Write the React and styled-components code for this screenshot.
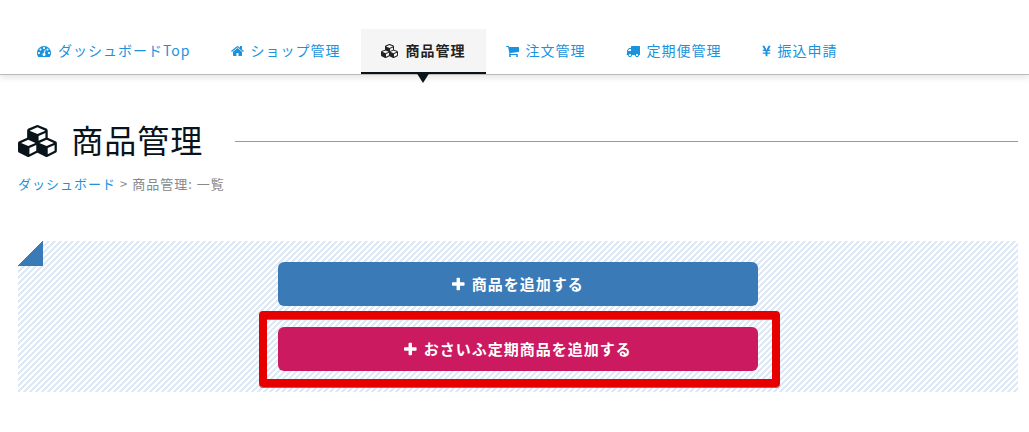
import styled, { createGlobalStyle } from "styled-components";
import { FaYenSign } from "react-icons/fa";

const GlobalStyle = createGlobalStyle`
* {
  box-sizing: border-box;
}
body {
  margin: 0;
  background: #fff;
  color: #08131a;
  font-family: "Noto Sans CJK JP", "Noto Sans", sans-serif;
  font-size: 14px;
  letter-spacing: 1px;
}
a {
  color: #1a93dc;
  text-decoration: none;
}
`;

const Icon = styled.svg`
  height: ${(props) => props.$size || 14}px;
  flex: none;
  fill: currentColor;
`;

const YenIcon = styled(FaYenSign)`
  width: 9px;
  height: 12px;
  flex: none;
`;

const Label = styled.span`
  padding-bottom: ${(props) => (props.$large ? 4 : 2)}px;
`;

const Header = styled.header`
  padding: 29px 17px 0;
  border-bottom: 1px solid #bbb;
  box-shadow: 0 3px 6px rgba(0, 0, 0, 0.1);
`;

const NavList = styled.ul`
  display: flex;
  margin: 0;
  padding: 0;
  list-style: none;
`;

const NavLink = styled.a`
  position: relative;
  display: flex;
  align-items: center;
  gap: 7px;
  height: 45px;
  padding: 0 20px;
  white-space: nowrap;
  color: ${(props) => (props.$active ? "#222" : "#1a93dc")};
  background: ${(props) => (props.$active ? "#f5f5f5" : "transparent")};
  font-weight: ${(props) => (props.$active ? 700 : 400)};
  border-bottom: 2px solid ${(props) => (props.$active ? "#08131a" : "transparent")};

  &::after {
    content: "";
    display: ${(props) => (props.$active ? "block" : "none")};
    position: absolute;
    top: 100%;
    left: 50%;
    margin-left: -7px;
    border: 7px solid transparent;
    border-top: 11px solid #08131a;
    border-bottom: 0;
  }
`;

const Main = styled.main`
  padding: 44px 11px 40px 18px;
`;

const TitleRow = styled.div`
  display: flex;
  align-items: center;
  gap: 32px;

  &::after {
    content: "";
    flex: 1;
    border-top: 1px solid #999;
  }
`;

const Title = styled.h1`
  display: flex;
  align-items: center;
  gap: 12px;
  margin: 0;
  font-size: 32px;
  font-weight: 400;
  line-height: 40px;
`;

const Breadcrumb = styled.nav`
  display: flex;
  gap: 4px;
  margin-top: 11px;
  font-size: 13px;
  line-height: 20px;
  color: #888;
`;

const Panel = styled.section`
  position: relative;
  display: flex;
  flex-direction: column;
  align-items: center;
  gap: 21px;
  margin-top: 47px;
  padding: 21px 0;
  background: linear-gradient(135deg, #dfe9f5 25%, #fff 25% 50%, #dfe9f5 50% 75%, #fff 75%) 0 0 / 6px 6px;

  &::before {
    content: "";
    position: absolute;
    top: 0;
    left: 0;
    width: 25px;
    height: 25px;
    background: linear-gradient(135deg, #fff 50%, #3a7ab7 50%);
  }
`;

const ButtonSlot = styled.div`
  position: relative;
  width: 48%;
`;

const AddButton = styled.button`
  display: flex;
  align-items: center;
  justify-content: center;
  gap: 7px;
  width: 100%;
  height: 44px;
  border: 0;
  border-radius: 6px;
  background: ${(props) => (props.$pink ? "#cc1a60" : "#3a7ab7")};
  color: #fff;
  font-family: inherit;
  font-size: 15px;
  font-weight: 700;
  letter-spacing: inherit;
  cursor: pointer;
`;

const Highlight = styled.span`
  position: absolute;
  inset: -16px -22px -16px -19px;
  border: 8px solid #e60000;
  border-radius: 4px;
  box-shadow: 0 1px 0 #777, inset 0 1px 0 #777;
  pointer-events: none;
`;

const paths = {
  dashboard:
    "M384 1152q0-53-37.5-90.5t-90.5-37.5-90.5 37.5-37.5 90.5 37.5 90.5 90.5 37.5 90.5-37.5 37.5-90.5zm192-448q0-53-37.5-90.5t-90.5-37.5-90.5 37.5-37.5 90.5 37.5 90.5 90.5 37.5 90.5-37.5 37.5-90.5zm428 481l101-382q6-26-7.5-48.5t-38.5-29.5-48 6.5-30 39.5l-101 382q-60 5-107 43.5t-63 98.5q-20 77 20 146t117 89 146-20 89-117q16-60-6-117t-72-91zm660-33q0-53-37.5-90.5t-90.5-37.5-90.5 37.5-37.5 90.5 37.5 90.5 90.5 37.5 90.5-37.5 37.5-90.5zm-640-640q0-53-37.5-90.5t-90.5-37.5-90.5 37.5-37.5 90.5 37.5 90.5 90.5 37.5 90.5-37.5 37.5-90.5zm448 192q0-53-37.5-90.5t-90.5-37.5-90.5 37.5-37.5 90.5 37.5 90.5 90.5 37.5 90.5-37.5 37.5-90.5zm320 448q0 261-141 483-19 29-54 29h-1402q-35 0-54-29-141-221-141-483 0-182 71-348t191-286 286-191 348-71 348 71 286 191 191 286 71 348z",
  home: "M1472 992v480q0 26-19 45t-45 19h-384v-384h-256v384h-384q-26 0-45-19t-19-45v-480q0-1 .5-3t.5-3l575-474 575 474q1 2 1 6zm223-69l-62 74q-8 9-21 11h-3q-13 0-21-7l-692-577-692 577q-12 8-24 7-13-2-21-11l-62-74q-8-10-7-23.5t11-21.5l719-599q32-26 76-26t76 26l244 204v-195q0-14 9-23t23-9h192q14 0 23 9t9 23v408l219 182q10 8 11 21.5t-7 23.5z",
  cubes:
    "M640 1632l384-192v-314l-384 164v342zm-64-454l404-173-404-173-404 173zm1088 454l384-192v-314l-384 164v342zm-64-454l404-173-404-173-404 173zm-448-293l384-165v-266l-384 164v267zm-64-379l441-189-441-189-441 189zm1088 518v416q0 36-19 67t-52 47l-448 224q-25 14-57 14t-57-14l-448-224q-4-2-7-4-2 2-7 4l-448 224q-25 14-57 14t-57-14l-448-224q-33-16-52-47t-19-67v-416q0-38 21.5-70t56.5-48l434-186v-400q0-38 21.5-70t56.5-48l448-192q23-10 50-10t50 10l448 192q35 16 56.5 48t21.5 70v400l434 186q36 16 57 48t21 70z",
  cart: "M704 1536q0 52-38 90t-90 38-90-38-38-90 38-90 90-38 90 38 38 90zm896 0q0 52-38 90t-90 38-90-38-38-90 38-90 90-38 90 38 38 90zm128-1088v512q0 24-16.5 42.5t-40.5 21.5l-1044 122q13 60 13 70 0 16-24 64h920q26 0 45 19t19 45-19 45-45 19h-1024q-26 0-45-19t-19-45q0-11 8-31.5t16-36 21.5-40 15.5-29.5l-177-823h-204q-26 0-45-19t-19-45 19-45 45-19h256q16 0 28.5 6.5t19.5 15.5 13 24.5 8 26 5.5 29.5 4.5 26h1201q26 0 45 19t19 45z",
  truck:
    "M640 1408q0-52-38-90t-90-38-90 38-38 90 38 90 90 38 90-38 38-90zm-384-512h384v-256h-158q-13 0-22 9l-195 195q-9 9-9 22v30zm1280 512q0-52-38-90t-90-38-90 38-38 90 38 90 90 38 90-38 38-90zm256-1088v1024q0 15-4 26.5t-13.5 18.5-16.5 11.5-23.5 6-22.5 2-25.5 0-22.5-.5q0 106-75 181t-181 75-181-75-75-181h-384q0 106-75 181t-181 75-181-75-75-181h-64q-3 0-22.5.5t-25.5 0-22.5-2-23.5-6-16.5-11.5-13.5-18.5-4-26.5q0-26 19-45t45-19v-320q0-8-.5-35t0-38 2.5-34.5 6.5-37 14-30.5 22.5-30l198-198q19-19 50.5-32t58.5-13h160v-192q0-26 19-45t45-19h1024q26 0 45 19t19 45z",
  plus: "M1600 736v192q0 40-28 68t-68 28h-416v416q0 40-28 68t-68 28h-192q-40 0-68-28t-28-68v-416h-416q-40 0-68-28t-28-68v-192q0-40 28-68t68-28h416v-416q0-40 28-68t68-28h192q40 0 68 28t28 68v416h416q40 0 68 28t28 68z",
};

// [min-x, min-y, width, height] where the drawing is not a 1792 square
const boxes = {
  home: "64 0 1664 1792",
  cubes: "0 0 2304 1792",
  cart: "64 0 1664 1792",
  plus: "192 -64 1408 1792",
};

const Glyph = ({ name, size }) => (
  <Icon viewBox={boxes[name] || "0 0 1792 1792"} $size={size} aria-hidden="true">
    <path d={paths[name]} />
  </Icon>
);

const items = [
  { icon: "dashboard", label: "ダッシュボードTop" },
  { icon: "home", label: "ショップ管理" },
  { icon: "cubes", label: "商品管理", active: true },
  { icon: "cart", label: "注文管理" },
  { icon: "truck", label: "定期便管理" },
  { icon: "yen", label: "振込申請" },
];

const App = () => {
  return (
    <>
      <GlobalStyle />
      <Header>
        <nav>
          <NavList>
            {items.map((item) => (
              <li key={item.label}>
                <NavLink href="#" $active={item.active}>
                  {item.icon === "yen" ? <YenIcon /> : <Glyph name={item.icon} />}
                  <Label>{item.label}</Label>
                </NavLink>
              </li>
            ))}
          </NavList>
        </nav>
      </Header>
      <Main>
        <TitleRow>
          <Title>
            <Glyph name="cubes" size={32} />
            <Label $large>商品管理</Label>
          </Title>
        </TitleRow>
        <Breadcrumb>
          <a href="#">ダッシュボード</a>
          <span>&gt;</span>
          <span>商品管理: 一覧</span>
        </Breadcrumb>
        <Panel>
          <ButtonSlot>
            <AddButton type="button">
              <Glyph name="plus" size={16} />
              <Label>商品を追加する</Label>
            </AddButton>
          </ButtonSlot>
          <ButtonSlot>
            <AddButton type="button" $pink>
              <Glyph name="plus" size={16} />
              <Label>おさいふ定期商品を追加する</Label>
            </AddButton>
            <Highlight />
          </ButtonSlot>
        </Panel>
      </Main>
    </>
  );
};

export default App;
